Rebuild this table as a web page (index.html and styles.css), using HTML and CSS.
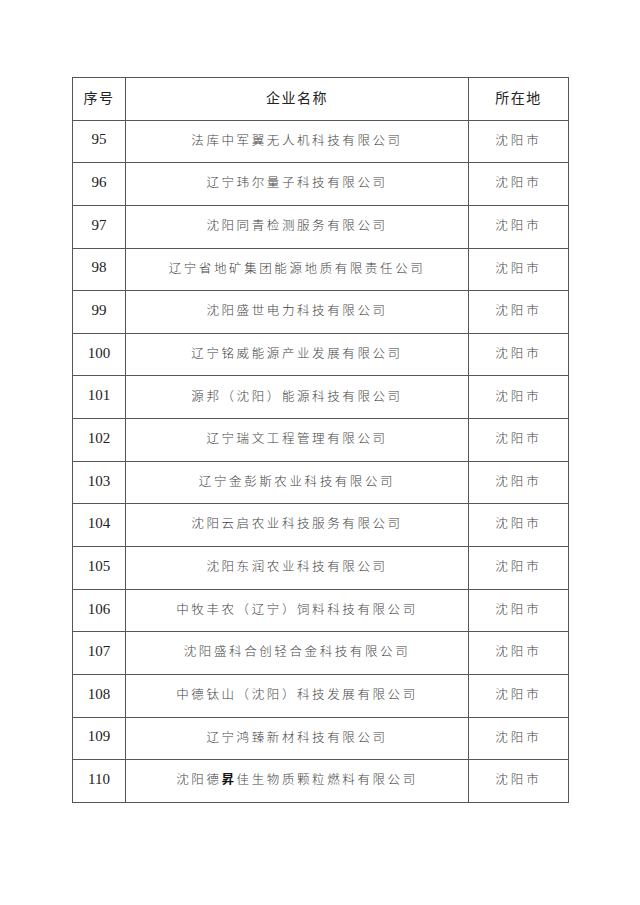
FILE: index.html
```html
<!DOCTYPE html>
<html lang="zh">
<head>
<meta charset="utf-8">
<link rel="stylesheet" href="styles.css">
</head>
<body>
<div class="page">
<table class="list">
<colgroup><col class="c1"><col class="c2"><col class="c3"></colgroup>
<thead>
<tr><th>序号</th><th>企业名称</th><th>所在地</th></tr>
</thead>
<tbody>
<tr><td class="num">95</td><td>法库中军翼无人机科技有限公司</td><td>沈阳市</td></tr>
<tr><td class="num">96</td><td>辽宁玮尔量子科技有限公司</td><td>沈阳市</td></tr>
<tr><td class="num">97</td><td>沈阳同青检测服务有限公司</td><td>沈阳市</td></tr>
<tr><td class="num">98</td><td>辽宁省地矿集团能源地质有限责任公司</td><td>沈阳市</td></tr>
<tr><td class="num">99</td><td>沈阳盛世电力科技有限公司</td><td>沈阳市</td></tr>
<tr><td class="num">100</td><td>辽宁铭威能源产业发展有限公司</td><td>沈阳市</td></tr>
<tr><td class="num">101</td><td>源邦（沈阳）能源科技有限公司</td><td>沈阳市</td></tr>
<tr><td class="num">102</td><td>辽宁瑞文工程管理有限公司</td><td>沈阳市</td></tr>
<tr><td class="num">103</td><td>辽宁金彭斯农业科技有限公司</td><td>沈阳市</td></tr>
<tr><td class="num">104</td><td>沈阳云启农业科技服务有限公司</td><td>沈阳市</td></tr>
<tr><td class="num">105</td><td>沈阳东润农业科技有限公司</td><td>沈阳市</td></tr>
<tr><td class="num">106</td><td>中牧丰农（辽宁）饲料科技有限公司</td><td>沈阳市</td></tr>
<tr><td class="num">107</td><td>沈阳盛科合创轻合金科技有限公司</td><td>沈阳市</td></tr>
<tr><td class="num">108</td><td>中德钛山（沈阳）科技发展有限公司</td><td>沈阳市</td></tr>
<tr><td class="num">109</td><td>辽宁鸿臻新材科技有限公司</td><td>沈阳市</td></tr>
<tr><td class="num">110</td><td>沈阳德<span class="odd">昇</span>佳生物质颗粒燃料有限公司</td><td>沈阳市</td></tr>
</tbody>
</table>
</div>
</body>
</html>
```
FILE: styles.css
```css
html, body {
  margin: 0;
  padding: 0;
  background: #ffffff;
}
.page {
  padding: 77px 0 0 72px;
}
.list {
  border-collapse: collapse;
  width: 496px;
  table-layout: fixed;
  font-family: "Noto Sans CJK SC", sans-serif;
  color: #444;
}
.c1 { width: 53px; }
.c2 { width: 343px; }
.c3 { width: 100px; }
.list th,
.list td {
  height: 42.65px;
  padding: 0 0 3px 0;
  text-align: center;
  vertical-align: middle;
  border: 1px solid #555;
  font-size: 12.5px;
  font-weight: 300;
  letter-spacing: 2.6px;
  line-height: 1;
  box-sizing: border-box;
}
.list tbody td {
  border-top-color: #8a8a8a;
}
.list th {
  font-size: 14px;
  font-weight: 400;
  color: #222;
  letter-spacing: 1.5px;
}
.list td.num {
  font-family: "Liberation Serif", serif;
  font-size: 15px;
  font-weight: 400;
  letter-spacing: 0;
  color: #222;
}
.list td:last-child {
  letter-spacing: 3px;
}
.odd {
  font-weight: 700;
  color: #111;
}
```
